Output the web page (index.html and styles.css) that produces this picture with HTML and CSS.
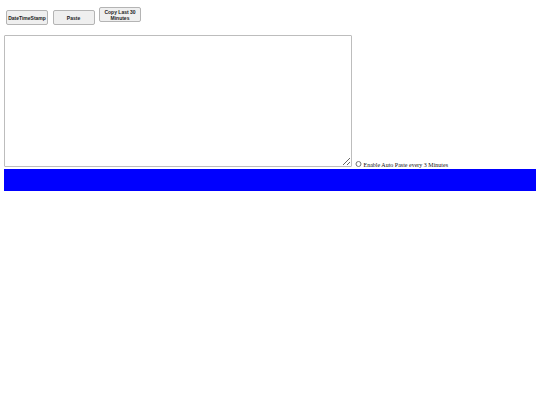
FILE: index.html
```html
<!DOCTYPE html>
<html lang="en">
<head>
    <meta charset="UTF-8">
    <meta name="viewport" content="width=device-width, initial-scale=1.0">
    <title>Clipboard Log</title>
    <link rel="stylesheet" href="styles.css">
</head>
<body>
    <div class="toolbar">
        <button type="button" class="tool-btn" id="stampBtn">DateTimeStamp</button>
        <button type="button" class="tool-btn" id="pasteBtn">Paste</button>
        <button type="button" class="tool-btn" id="copyBtn">Copy Last 30 Minutes</button>
    </div>

    <div class="editor">
        <textarea id="log" class="log-box"></textarea><input type="radio" id="autoPaste" class="auto-radio"><label for="autoPaste" class="auto-label">Enable Auto Paste every 3 Minutes</label>
    </div>

    <div class="status-bar" id="status"></div>
</body>
</html>
```
FILE: styles.css
```css
body {
    margin: 4px;
    font-family: "Liberation Serif", "Times New Roman", serif;
    font-size: 6px;
    background-color: #fff;
}

.toolbar {
    padding-top: 3px;
    margin-bottom: 10px;
    font-size: 6px;
}

.tool-btn {
    width: 42px;
    height: 15px;
    margin: 0 1px 0 2px;
    padding: 0 1px;
    font-family: "Liberation Sans", Arial, sans-serif;
    font-size: 5px;
    font-weight: bold;
    color: #222;
    background-color: #efefef;
    border: 1px solid #b4b4b4;
    border-radius: 2px;
    vertical-align: baseline;
}

.editor {
    line-height: 1;
}

.log-box {
    width: 348px;
    height: 132px;
    margin: 0;
    padding: 1px;
    border: 1px solid #bdbdbd;
    border-radius: 1px;
    box-sizing: border-box;
    vertical-align: baseline;
}

.auto-radio {
    width: 6.5px;
    height: 6.5px;
    margin: 0 2px 0 3px;
    vertical-align: baseline;
}

.auto-label {
    font-size: 6px;
    color: #111;
}

.status-bar {
    height: 22px;
    margin-top: 1px;
    background-color: #0000ff;
}
```
